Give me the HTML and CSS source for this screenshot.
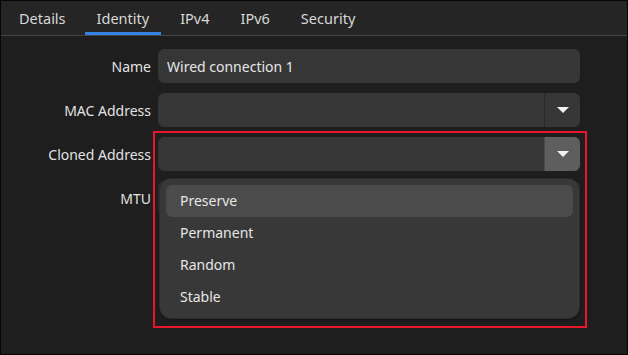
FILE: index.html
```
<!DOCTYPE html>
<html>
<head>
<meta charset="utf-8">
<link rel="stylesheet" href="styles.css">
</head>
<body>
<div class="window">
  <div class="tabs">
    <div class="tab">Details</div>
    <div class="tab active">Identity</div>
    <div class="tab">IPv4</div>
    <div class="tab">IPv6</div>
    <div class="tab">Security</div>
  </div>
  <div class="form">
    <div class="label">Name</div>
    <div class="field"><span class="value">Wired connection 1</span></div>
    <div class="label">MAC Address</div>
    <div class="field combo"><span class="value"></span><span class="btn"><svg width="12" height="6" viewBox="0 0 12 6"><path d="M0 0H12L6 6Z" fill="#f2f2f2"/></svg></span></div>
    <div class="label">Cloned Address</div>
    <div class="field combo open"><span class="value"></span><span class="btn"><svg width="12" height="6" viewBox="0 0 12 6"><path d="M0 0H12L6 6Z" fill="#f2f2f2"/></svg></span></div>
    <div class="label">MTU</div>
    <div class="field"></div>
  </div>
  <div class="popover">
    <div class="item selected">Preserve</div>
    <div class="item">Permanent</div>
    <div class="item">Random</div>
    <div class="item">Stable</div>
  </div>
  <div class="highlight"></div>
</div>
</body>
</html>
```
FILE: styles.css
```
* { box-sizing: border-box; }
html, body { margin: 0; padding: 0; background: #1e1e1e; }
body { font-family: "Noto Sans", "DejaVu Sans", sans-serif; font-size: 14px; color: #e4e4e4; }
.window {
  position: relative;
  width: 628px;
  height: 355px;
  border: 1px solid #050505;
  background: #1e1e1e;
  overflow: hidden;
}
.tabs {
  display: flex;
  height: 35px;
  padding-left: 6px;
  gap: 7px;
  background: #252525;
  border-bottom: 1px solid #454545;
}
.tab {
  padding: 0 12px;
  line-height: 34px;
  color: #d8d8d8;
  font-size: 14.5px;
  border-bottom: 3px solid transparent;
}
.tab.active { border-bottom-color: #3584e4; }
.form {
  display: grid;
  grid-template-columns: 150px 422px;
  column-gap: 7px;
  row-gap: 10px;
  padding-top: 13px;
  align-items: center;
}
.label {
  text-align: right;
  color: #e2e2e2;
}
.field {
  height: 34px;
  border-radius: 6px;
  background: #363636;
  display: flex;
  align-items: center;
  overflow: hidden;
}
.value { flex: 1; padding-left: 9px; color: #e6e6e6; }
.btn {
  width: 36px;
  height: 100%;
  display: flex;
  align-items: center;
  justify-content: center;
  border-left: 1px solid #2a2a2a;
}
.open .btn { background: #5e5e5e; border-left-color: #4a4a4a; }
.popover {
  position: absolute;
  left: 158px;
  top: 177px;
  width: 421px;
  height: 141px;
  padding: 6px;
  background: #383838;
  border: 1px solid #2c2c2c;
  border-radius: 12px;
  box-shadow: 0 1px 3px rgba(0,0,0,0.4);
}
.item {
  height: 32px;
  line-height: 32px;
  padding-left: 14px;
  border-radius: 6px;
  color: #e6e6e6;
}
.item.selected { background: #4b4b4b; }
.highlight {
  position: absolute;
  left: 152px;
  top: 130px;
  width: 434px;
  height: 197px;
  border: 2px solid #e8182c;
}
```
